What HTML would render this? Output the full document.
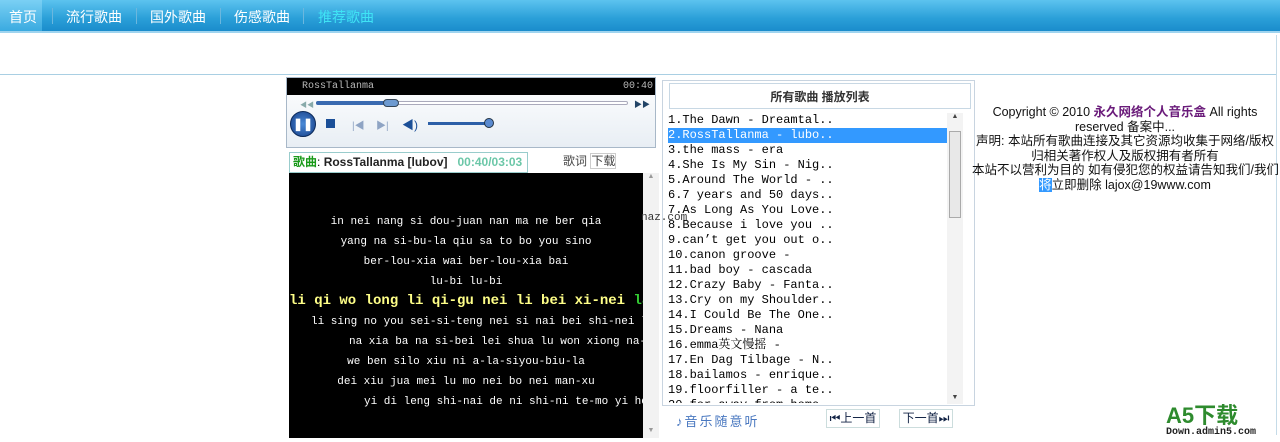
<!DOCTYPE html>
<html><head><meta charset="utf-8"><style>
*{margin:0;padding:0;box-sizing:border-box}
body{width:1280px;height:442px;background:#fff;position:relative;overflow:hidden;font-family:"Liberation Sans","Noto Sans CJK SC",sans-serif}
.abs{position:absolute}
#nav{left:0;top:0;width:1280px;height:33px;background:linear-gradient(#5cc3ef,#2a9fd8 60%,#1a8ccc);border-bottom:2px solid #9fd4ef}
#nav span{position:absolute;top:7px;font-size:14px;color:#fff}
.sep{position:absolute;top:8px;width:1px;height:16px;background:#6bb7de}
.lst{font-family:"Liberation Mono","Noto Serif CJK SC",monospace;font-size:12px;line-height:15px;color:#000;white-space:nowrap}
.ly{font-family:"Liberation Mono","Noto Serif CJK SC",monospace;font-size:11px;color:#fff;text-align:center;white-space:nowrap;position:absolute;left:0;width:354px}
</style></head><body>
<div id="nav" class="abs">
<div class="abs" style="left:0;top:0;width:42px;height:31px;background:linear-gradient(#7ad0f4,#3aaae0)"></div>
<span style="left:9px">首页</span><div class="sep" style="left:52px"></div>
<span style="left:66px">流行歌曲</span><div class="sep" style="left:136px"></div>
<span style="left:150px">国外歌曲</span><div class="sep" style="left:220px"></div>
<span style="left:234px">伤感歌曲</span><div class="sep" style="left:303px"></div>
<span style="left:318px;color:#3fe3f5">推荐歌曲</span>
</div>
<div class="abs" style="left:0;top:74px;width:1276px;height:1px;background:#a9cfe3"></div>
<div class="abs" style="left:1276px;top:35px;width:1px;height:400px;background:#c5dbe8"></div>

<!-- player -->
<div class="abs" style="left:286px;top:77px;width:370px;height:71px;border:1px solid #a8b8c8;background:linear-gradient(#fff,#e8eef4)"></div>
<div class="abs" style="left:287px;top:78px;width:368px;height:17px;background:#000;color:#bbb;font:10px 'Liberation Mono',monospace;line-height:17px"><span style="position:absolute;left:15px">RossTallanma</span><span style="position:absolute;right:2px">00:40</span></div>
<div class="abs" style="left:300px;top:100px;font-size:7px;color:#8aa">◀◀</div>
<div class="abs" style="left:316px;top:101px;width:312px;height:4px;border:1px solid #aab;border-radius:2px;background:#fff"></div>
<div class="abs" style="left:316px;top:101px;width:75px;height:4px;background:#3a6ab0;border-radius:2px"></div>
<div class="abs" style="left:383px;top:99px;width:16px;height:8px;background:#6d9ad0;border-radius:4px;border:1px solid #345"></div>
<div class="abs" style="left:634px;top:99px;font-size:8px;color:#246">▶▶</div>
<div class="abs" style="left:290px;top:111px;width:26px;height:26px;border-radius:50%;background:radial-gradient(#4a8ad8,#163e86);border:1px solid #0c2a5a;color:#fff;font-size:12px;line-height:24px;text-align:center;font-weight:bold">❚❚</div>
<div class="abs" style="left:326px;top:119px;width:9px;height:9px;background:#1b4f98"></div>
<div class="abs" style="left:352px;top:117px;font-size:10px;color:#8fa4c4">|◀</div>
<div class="abs" style="left:376px;top:117px;font-size:10px;color:#8fa4c4">▶|</div>
<div class="abs" style="left:402px;top:116px;font-size:12px;color:#1b4f98">◀)</div>
<div class="abs" style="left:428px;top:122px;width:62px;height:3px;background:#2c5fa8"></div>
<div class="abs" style="left:484px;top:118px;width:10px;height:10px;border-radius:50%;background:#5a8ad0;border:1px solid #234"></div>

<!-- song title -->
<div class="abs" style="left:289px;top:152px;width:239px;height:21px;border:1px solid #9cc;background:#fff;font-size:12px;line-height:19px;padding-left:3px;white-space:nowrap"><b style="color:#1a9a1a">歌曲</b>: <b style="color:#222">RossTallanma [lubov]</b>&nbsp;&nbsp;&nbsp;<b style="color:#6cc7a8">00:40/03:03</b></div>
<div class="abs" style="left:563px;top:152px;font-size:12px;color:#444">歌词 <span style="border:1px solid #ccc">下载</span></div>

<!-- lyrics -->
<div class="abs" style="left:289px;top:173px;width:354px;height:265px;background:#000;overflow:hidden">
<div class="ly" style="top:43px">in nei nang si dou-juan nan ma ne ber qia</div>
<div class="ly" style="top:63px">yang na si-bu-la qiu sa to bo you sino</div>
<div class="ly" style="top:83px">ber-lou-xia wai ber-lou-xia bai</div>
<div class="ly" style="top:103px">lu-bi lu-bi</div>
<div class="ly" style="top:120px;font-size:14px;font-weight:bold;color:#ff8;text-align:left">li qi wo long li qi-gu nei li bei xi-nei <span style="color:#3c3">la l</span></div>
<div class="ly" style="top:143px;text-align:left;left:22px">li sing no you sei-si-teng nei si nai bei shi-nei leng n</div>
<div class="ly" style="top:163px;text-align:left;left:60px">na xia ba na si-bei lei shua lu won xiong na-si b</div>
<div class="ly" style="top:183px">we ben silo xiu ni a-la-siyou-biu-la</div>
<div class="ly" style="top:203px">dei xiu jua mei lu mo nei bo nei man-xu</div>
<div class="ly" style="top:223px;text-align:left;left:75px">yi di leng shi-nai de ni shi-ni te-mo yi he qi</div>
</div>
<div class="abs" style="left:643px;top:173px;width:16px;height:265px;background:#f2f2f2;font-size:7px;color:#999;text-align:center">▲<div style="position:absolute;bottom:4px;width:16px">▼</div></div>
<div class="abs" style="left:641px;top:212px;font:11px 'Liberation Mono',monospace;color:#333">naz.com</div>

<!-- playlist -->
<div class="abs" style="left:662px;top:80px;width:313px;height:326px;border:1px solid #c8d4e0"></div>
<div class="abs" style="left:669px;top:83px;width:302px;height:26px;border:1px solid #c8d8e4;text-align:center;font-size:12px;font-weight:bold;line-height:26px;color:#333">所有歌曲 播放列表</div>
<div class="abs" style="left:947px;top:113px;width:16px;height:291px;background:#f3f3f3;font-size:7px;color:#444;text-align:center">▲
<div style="position:absolute;left:2px;top:18px;width:12px;height:87px;background:#e8e8e8;border:1px solid #aaa"></div><div style="position:absolute;bottom:3px;width:16px">▼</div></div>
<div class="abs lst" style="left:668px;top:113px;width:279px;height:290px;overflow:hidden">
<div>1.The Dawn - Dreamtal..</div>
<div style="background:#3399ff;color:#fff">2.RossTallanma - lubo..</div>
<div>3.the mass - era</div>
<div>4.She Is My Sin - Nig..</div>
<div>5.Around The World - ..</div>
<div>6.7 years and 50 days..</div>
<div>7.As Long As You Love..</div>
<div>8.Because i love you ..</div>
<div>9.can’t get you out o..</div>
<div>10.canon groove -</div>
<div>11.bad boy - cascada</div>
<div>12.Crazy Baby - Fanta..</div>
<div>13.Cry on my Shoulder..</div>
<div>14.I Could Be The One..</div>
<div>15.Dreams - Nana</div>
<div>16.emma英文慢摇 -</div>
<div>17.En Dag Tilbage - N..</div>
<div>18.bailamos - enrique..</div>
<div>19.floorfiller - a te..</div>
<div>20.for away from home</div>
</div>
<div class="abs" style="left:676px;top:411px;font-size:13px;color:#4a78c0;letter-spacing:2px">♪音乐随意听</div>
<div class="abs" style="left:826px;top:409px;width:54px;height:19px;border:1px solid #cdd;font-size:12px;line-height:17px;text-align:center;color:#124">⏮上一首</div>
<div class="abs" style="left:899px;top:409px;width:54px;height:19px;border:1px solid #cdd;font-size:12px;line-height:17px;text-align:center;color:#124">下一首⏭</div>

<!-- copyright -->
<div class="abs" style="left:972px;top:105px;width:306px;font-size:12.5px;line-height:14.5px;text-align:center;color:#111;white-space:nowrap;overflow:hidden">Copyright © 2010 <b style="color:#6a1b7a">永久网络个人音乐盒</b> All rights<br>reserved 备案中...<br>声明: 本站所有歌曲连接及其它资源均收集于网络/版权<br>归相关著作权人及版权拥有者所有<br>本站不以营利为目的 如有侵犯您的权益请告知我们/我们<br><span style="background:#39f;color:#fff">将</span>立即删除 lajox@19www.com</div>

<div class="abs" style="left:1166px;top:405px;font-size:22px;font-weight:bold;color:#2e8b2e;line-height:22px">A5下载</div>
<div class="abs" style="left:1166px;top:427px;font:bold 10px 'Liberation Mono',monospace;color:#222">Down.admin5.com</div>
</body></html>
